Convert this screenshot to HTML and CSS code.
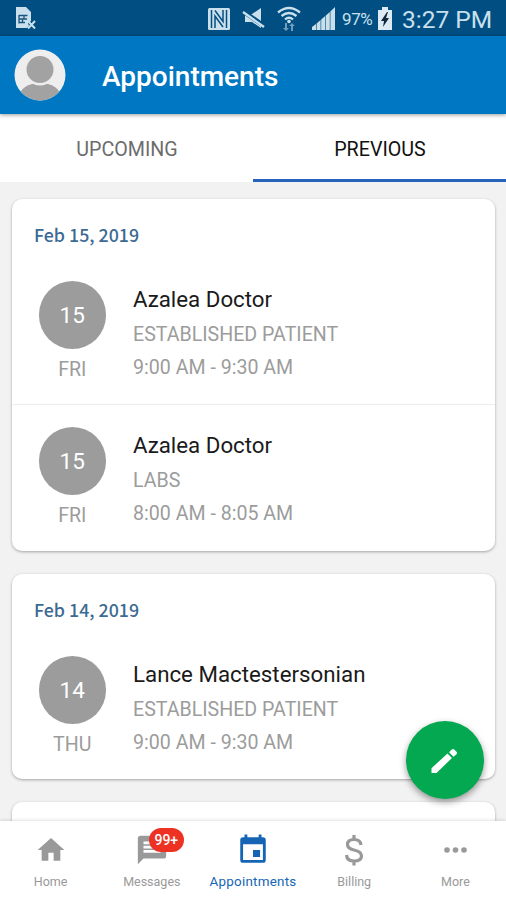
FILE: index.html
```html
<!DOCTYPE html>
<html lang="en">
<head>
<meta charset="utf-8">
<title>Appointments</title>
<link rel="stylesheet" href="styles.css">
</head>
<body>
<div class="app">
  <div class="status">
    <svg class="s-sim" width="22" height="24" viewBox="0 0 22 24"><path fill="#c9e0ec" d="M1 0h10l5 5v9l-3 2 1 3-2 2H1z"/><path fill="none" stroke="#17557f" stroke-width="1.300" d="M4 8.500h8.500M4 12h8M4 15.500h6M4 8v8.500M7.500 12v4M9 8v4"/><path stroke="#c9e0ec" stroke-width="2" d="M13 14l7 7.500M20 14l-7 7.500"/></svg>
    <svg class="s-nfc" width="24" height="24" viewBox="0 0 24 24"><rect x="1" y="1" width="22" height="22" rx="1.500" fill="#c9e0ec"/><path fill="none" stroke="#064d80" stroke-width="1.500" d="M8 21V9l8 11M8 3.500l8 11V3M4.500 3v18M19.500 3v18"/></svg>
    <svg class="s-mute" width="24" height="22" viewBox="0 0 24 22"><path fill="#c9e0ec" d="M3 6h7l9-6v20l-9-6H3z"/><path stroke="#004e82" stroke-width="4.500" d="M0 2.500l23 16"/><path stroke="#c9e0ec" stroke-width="2.400" d="M1 4l21 15"/></svg>
    <svg class="s-wifi" width="24" height="26" viewBox="0 0 24 26"><g fill="none" stroke="#c9e0ec" stroke-width="2.300"><path d="M1 6.500q11-9 22 0M4.500 10q7.500-6 15 0M8 13.500q4-3.500 8 0"/></g><circle cx="12" cy="15.500" r="1.800" fill="#c9e0ec"/><path fill="#6f9dbd" d="M8 17h2v5h2l-3 3-3-3h2zM14 25h2v-5h2l-3-3-3 3h2z"/></svg>
    <svg class="s-signal" width="24" height="24" viewBox="0 0 24 24"><path fill="#c9e0ec" d="M0 20l4-3v6H0zM4.600 16.500l4-3.500v10h-4zM9.200 12.500l4-3.500v14h-4zM13.800 8.500l4-3.500v18h-4zM18.400 4.500L23 0v23h-4.600z"/></svg>
    <span class="s-pct">97%</span>
    <svg class="s-batt" width="16" height="24" viewBox="0 0 16 24"><path fill="#dcebf3" d="M5 0h6v3h4v20H1V3h4z"/><path fill="#10263a" d="M10 5L4 14h3l-1 6 6-9H9l2-6z"/></svg>
    <span class="s-time">3:27 PM</span>
  </div>

  <header class="bar">
    <svg class="avatar" width="52" height="52" viewBox="0 0 52 52"><defs><clipPath id="face"><circle cx="26" cy="26" r="25.500"/></clipPath></defs><g clip-path="url(#face)"><path fill="#eee" d="M0 0h52v52H0z"/><ellipse cx="26" cy="48" rx="21" ry="14" fill="#a2a2a2"/><circle cx="26" cy="20.500" r="16" fill="#eee"/><circle cx="26" cy="20.500" r="13.500" fill="#a2a2a2"/></g></svg>
    <h1 class="title">Appointments</h1>
  </header>

  <nav class="tabs">
    <div class="tab">UPCOMING</div>
    <div class="tab active">PREVIOUS</div>
  </nav>

  <main class="list">
    <section class="card">
      <h2 class="date">Feb 15, 2019</h2>
      <article class="entry">
        <div class="day"><div class="num">15</div><div class="dow">FRI</div></div>
        <div class="info"><div class="name">Azalea Doctor</div><div class="kind">ESTABLISHED PATIENT</div><div class="hours">9:00 AM - 9:30 AM</div></div>
      </article>
      <article class="entry divided">
        <div class="day"><div class="num">15</div><div class="dow">FRI</div></div>
        <div class="info"><div class="name">Azalea Doctor</div><div class="kind">LABS</div><div class="hours">8:00 AM - 8:05 AM</div></div>
      </article>
    </section>
    <section class="card">
      <h2 class="date">Feb 14, 2019</h2>
      <article class="entry">
        <div class="day"><div class="num">14</div><div class="dow">THU</div></div>
        <div class="info"><div class="name">Lance Mactestersonian</div><div class="kind">ESTABLISHED PATIENT</div><div class="hours">9:00 AM - 9:30 AM</div></div>
      </article>
    </section>
    <section class="card next"></section>
  </main>

  <div class="fab"><svg width="36" height="36" viewBox="0 0 36 36"><path fill="#fff" d="M4.500 31v-4.800L20.500 11.500l4.500 4.500L9.500 31zM22 10.200l2.800-2.700q1.200-1 2.400 0l2.300 2.300q1 1.200 0 2.400l-3 2.500z"/></svg></div>

  <nav class="bottom">
    <div class="item"><svg class="ic" width="32" height="32" viewBox="0 0 24 24"><path fill="currentColor" d="M10 20v-6h4v6h5v-8h3L12 3 2 12h3v8z"/></svg><span class="lbl">Home</span></div>
    <div class="item"><div class="iconwrap"><svg class="ic" width="34" height="34" viewBox="0 0 24 24"><path fill="currentColor" d="M20 2H4a2 2 0 0 0-2 2v18l4-4h14a2 2 0 0 0 2-2V4a2 2 0 0 0-2-2zM6 9h12v2H6zm12 5H6v-2h12zm0-6H6V6h12z"/></svg><span class="badge">99+</span></div><span class="lbl">Messages</span></div>
    <div class="item on"><svg class="ic" width="34" height="34" viewBox="0 0 24 24"><path fill="currentColor" d="M17 12h-5v5h5v-5zM16 1v2H8V1H6v2H5a2 2 0 0 0-2 2v14a2 2 0 0 0 2 2h14a2 2 0 0 0 2-2V5a2 2 0 0 0-2-2h-1V1h-2zm3 18H5V8h14v11z"/></svg><span class="lbl">Appointments</span></div>
    <div class="item"><svg class="ic" width="32" height="34" viewBox="0 0 32 34"><path fill="none" stroke="currentColor" stroke-width="3.200" d="M23 12q-.5-5.500-7-5.500-6.500 0-6.500 5 0 4 6.500 5.500 7.500 1.600 7.500 6 0 5-7.500 5-7 0-7.500-6M16 2v5M16 27.500v5"/></svg><span class="lbl">Billing</span></div>
    <div class="item"><svg class="ic" width="32" height="32" viewBox="0 0 32 32"><g fill="currentColor"><circle cx="8" cy="16" r="2.800"/><circle cx="16.500" cy="16" r="2.800"/><circle cx="25" cy="16" r="2.800"/></g></svg><span class="lbl">More</span></div>
  </nav>
</div>
</body>
</html>
```
FILE: styles.css
```css
* { box-sizing: border-box; }
body { margin: 0; font-family: Roboto, "Liberation Sans", sans-serif; background: #f2f2f2; }
.app { position: relative; width: 506px; height: 900px; overflow: hidden; display: flex; flex-direction: column; background: #f2f2f2; }

.status { flex: none; height: 36px; background: #004e82; color: #c9e0ec; display: flex; align-items: center; padding: 1px 0 0 15px; white-space: nowrap; }
.status svg { flex: none; }
.s-nfc { margin-left: 170px; }
.s-mute { margin-left: 11px; }
.s-wifi { margin-left: 11px; }
.s-signal { margin-left: 11px; }
.s-pct { width: 31px; margin-left: 6px; font-size: 17px; letter-spacing: -0.4px; padding-top: 1px; }
.s-batt { margin-left: 4px; }
.s-time { margin-left: 9px; font-size: 24.5px; padding-top: 2px; }

.bar { flex: none; height: 78px; background: #0077c3; display: flex; align-items: center; padding-left: 14px; position: relative; z-index: 2; box-shadow: 0 1px 4px rgba(0,0,0,.4); }
.title { margin: 3px 0 0 36px; font-size: 28px; font-weight: 500; line-height: 40px; color: #fff; white-space: nowrap; }

.tabs { flex: none; height: 68px; background: #fff; display: flex; }
.tab { flex: 1; display: flex; align-items: center; justify-content: center; font-size: 19.7px; color: #6c6c6c; border-bottom: 3px solid transparent; padding: 5px 0 0 1px; }
.tab.active { color: #111; border-color: #2763bb; }

.list { flex: 1; padding: 17px 11px 0 12px; display: flex; flex-direction: column; gap: 23px; overflow: hidden; }
.card { flex: none; background: #fff; border-radius: 10px; box-shadow: 0 1px 3px rgba(0,0,0,.32); }
.next { height: 80px; }
.date { margin: 0; height: 59px; padding: 9px 0 0 22px; line-height: 52px; font-family: "Noto Sans CJK SC", sans-serif; font-size: 17.8px; font-weight: 500; color: #3d6a92; white-space: nowrap; }
.entry { height: 146px; display: flex; padding: 23px 0 0 26.5px; }
.divided { height: 147px; padding-top: 22px; border-top: 1px solid #ececec; }
.day { width: 67.5px; text-align: center; }
.num { height: 67.5px; border-radius: 50%; background: #9c9c9c; color: #fff; font-size: 22.5px; line-height: 69px; }
.dow { font-size: 19.6px; line-height: 41px; color: #9c9c9c; }
.info { margin: 2px 0 0 27px; white-space: nowrap; font-size: 19.6px; color: #9c9c9c; }
.name { font-size: 22.3px; line-height: 32px; color: #1a1a1a; }
.kind { line-height: 40px; }
.hours { line-height: 25px; }

.fab { position: absolute; z-index: 3; left: 405.5px; top: 720.5px; width: 78.5px; height: 78.5px; border-radius: 50%; background: #04a850; display: flex; align-items: center; justify-content: center; box-shadow: 0 3px 7px rgba(0,0,0,.4); }

.bottom { flex: none; height: 79px; background: #fff; display: flex; position: relative; z-index: 2; box-shadow: 0 -1px 3px rgba(0,0,0,.12); }
.item { flex: 1; display: flex; flex-direction: column; align-items: center; color: #999; }
.ic { display: block; height: 34px; margin-top: 12px; }
.iconwrap { position: relative; }
.badge { position: absolute; left: 14px; top: 7px; width: 35px; height: 24px; border-radius: 12px; background: #ed3224; color: #fff; font-size: 14px; line-height: 25px; text-align: center; font-weight: 500; }
.lbl { margin-top: 7px; font-size: 12.5px; line-height: 16px; }
.on { color: #1565b4; }
.on .lbl { font-size: 13.4px; letter-spacing: .25px; }
```
